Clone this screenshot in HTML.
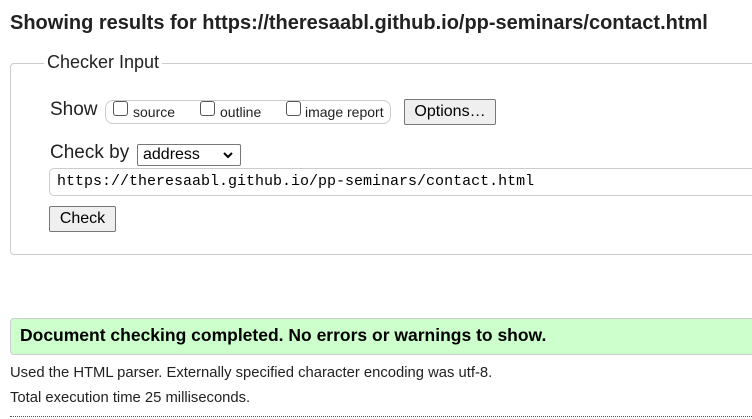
<!DOCTYPE html><html><head><style>
body{margin:0;width:752px;height:419px;overflow:hidden;background:#fff;font-family:"Liberation Sans",sans-serif;color:#000;position:relative}
.a{position:absolute;white-space:nowrap}
</style></head><body>
<div class="a" style="left:10px;top:12px;font-size:20px;font-weight:bold;color:#222">Showing results for https://theresaabl.github.io/pp-seminars/contact.html</div>
<div class="a" style="left:10px;top:63px;width:760px;height:190px;border:1px solid #ccc;border-radius:4px"></div>
<div class="a" style="left:44px;top:52px;font-size:18px;background:#fff;padding:0 3px;color:#222">Checker Input</div>
<div class="a" style="left:50px;top:99px;font-size:19px;color:#222">Show</div>
<div class="a" style="left:105px;top:100px;width:284px;height:22px;border:1px solid #ccc;border-radius:8px"></div>
<div class="a" style="left:113px;top:101px;width:13px;height:13px;border:1px solid #555;border-radius:3px"></div>
<div class="a" style="left:133px;top:104px;font-size:14px;color:#222">source</div>
<div class="a" style="left:200px;top:101px;width:13px;height:13px;border:1px solid #555;border-radius:3px"></div>
<div class="a" style="left:220px;top:104px;font-size:14px;color:#222">outline</div>
<div class="a" style="left:286px;top:101px;width:13px;height:13px;border:1px solid #555;border-radius:3px"></div>
<div class="a" style="left:305px;top:104px;font-size:14px;color:#222">image report</div>
<div class="a" style="left:404px;top:99px;width:90px;height:24px;border:1px solid #777;border-radius:2px;background:#efefef;font-size:16px;text-align:center;line-height:24px">Options…</div>
<div class="a" style="left:50px;top:142px;font-size:19px;color:#222">Check by</div>
<div class="a" style="left:137px;top:144px;border:1px solid #777;border-radius:2px;font-size:16px;line-height:20px;padding-left:5px;box-sizing:border-box;width:104px;height:22px">address<svg style="position:absolute;right:7px;top:7px" width="10" height="7" viewBox="0 0 10 7"><path d="M1 1L5 5L9 1" fill="none" stroke="#000" stroke-width="2"/></svg></div>
<div class="a" style="left:49px;top:168px;width:720px;height:26px;border:1px solid #ccc;border-radius:5px;font-family:'Liberation Mono',monospace;font-size:15px;line-height:26px;padding-left:7px">https://theresaabl.github.io/pp-seminars/contact.html</div>
<div class="a" style="left:49px;top:206px;width:65px;height:24px;border:1px solid #777;border-radius:2px;background:#efefef;font-size:16px;text-align:center;line-height:24px">Check</div>
<div class="a" style="left:10px;top:318px;width:760px;height:35px;border:1px solid #ccc;border-radius:4px;background:#ccffcc"></div>
<div class="a" style="left:20px;top:325px;font-size:17.5px;font-weight:bold">Document checking completed. No errors or warnings to show.</div>
<div class="a" style="left:10px;top:365px;font-size:14.8px;color:#222">Used the HTML parser. Externally specified character encoding was utf-8.</div>
<div class="a" style="left:10px;top:390px;font-size:14.8px;color:#222">Total execution time 25 milliseconds.</div>
<div class="a" style="left:10px;top:416px;width:742px;border-top:1px dotted #555"></div>
</body></html>
